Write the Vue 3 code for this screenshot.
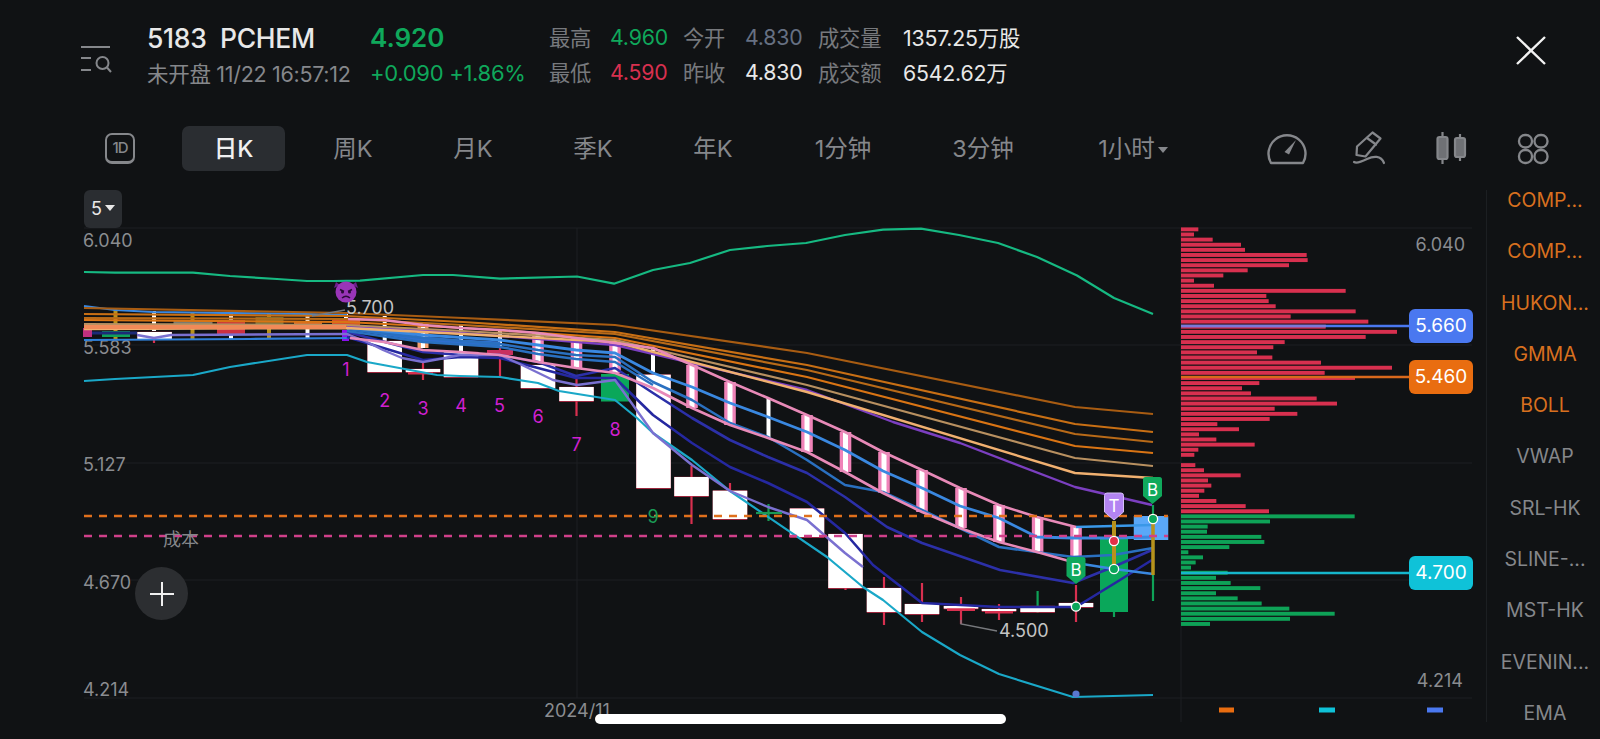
<template>
  <div class="page">
    <header class="head">
      <svg class="menu-ico" width="33" height="33" viewBox="0 0 33 33" fill="none" stroke="#85878b" stroke-width="2">
        <path d="M1 5H30M1 16H11M1 28H11" />
        <circle cx="22.5" cy="21" r="6" />
        <path d="M27 25.5L31 30" />
      </svg>
      <div class="quote">
        <div class="title">5183&nbsp;&nbsp;PCHEM</div>
        <div class="price">4.920</div>
        <div class="time">未开盘 11/22 16:57:12</div>
        <div class="change">+0.090 +1.86%</div>
      </div>
      <div class="stats">
        <template v-for="s in stats" :key="s.label">
          <span class="stat-label">{{ s.label }}</span>
          <span :class="s.cls">{{ s.value }}</span>
        </template>
      </div>
      <svg class="close-ico" width="30" height="30" viewBox="0 0 30 30" stroke="#f2f2f2" stroke-width="2.4">
        <path d="M1 2L29 29M29 2L1 29" />
      </svg>
    </header>

    <div class="toolbar">
      <div class="one-d">1D</div>
      <div class="tabs">
        <div v-for="t in tabs" :key="t.label" class="tab" :class="t.cls">
          {{ t.label }}<i v-if="t.arrow" class="arrow"></i>
        </div>
      </div>
      <div class="tools">
        <svg width="40" height="40" viewBox="0 0 40 40" fill="none" stroke="#85878b" stroke-width="2.4">
          <path d="M4 34A18.5 18.5 0 1 1 36 34Z" stroke-linejoin="round" />
          <path d="M17.5 23L29 11L22 25.5Z" fill="#85878b" stroke="none" />
        </svg>
        <svg width="40" height="40" viewBox="0 0 40 40" fill="none" stroke="#85878b" stroke-width="2.2" stroke-linejoin="round" stroke-linecap="round">
          <path d="M7.5 26L8 17.5L23.5 3.5L31.5 9.5L16.5 27.5Z" />
          <path d="M18 9L27 15.5" />
          <path d="M5 33C8 35 14 32 18 30C24 27 32 26 35 34" />
        </svg>
        <svg width="40" height="40" viewBox="0 0 40 40" fill="none" stroke="#85878b" stroke-width="2.2">
          <path d="M11.5 3V35M29 5V32" />
          <rect x="6.5" y="8" width="10" height="22" rx="2" fill="#6f7175" />
          <rect x="24" y="9" width="10" height="19" rx="2" fill="#6f7175" />
        </svg>
        <svg width="40" height="40" viewBox="0 0 40 40" fill="none" stroke="#85878b" stroke-width="2.3">
          <rect x="6" y="6" width="13" height="12.5" rx="6" />
          <rect x="21.5" y="6" width="13" height="12.5" rx="6" />
          <rect x="6" y="21" width="13" height="13" rx="6" />
          <rect x="21.5" y="21" width="13" height="13" rx="6" />
        </svg>
      </div>
    </div>

    <div class="main">
      <div class="chart">
        <svg class="plot" width="1486" height="553" viewBox="0 186 1486 553">
          <!-- grid -->
          <g stroke="#1c1f22" stroke-width="1">
            <line v-for="y in gridY" :key="y" x1="84" :y1="y" x2="1472" :y2="y" />
            <line x1="577" y1="228" x2="577" y2="698" />
            <line x1="1181" y1="228" x2="1181" y2="722" />
          </g>
          <g class="axis">
            <text x="83" y="247">6.040</text>
            <text x="83" y="354">5.583</text>
            <text x="83" y="471">5.127</text>
            <text x="83" y="589">4.670</text>
            <text x="83" y="696">4.214</text>
            <text x="1465" y="251" text-anchor="end">6.040</text>
            <text x="1463" y="687" text-anchor="end">4.214</text>
            <text x="544" y="717">2024/11</text>
          </g>

          <!-- volume profile -->
          <rect v-for="b in profile" :key="b.y" x="1181" :y="b.y" :width="b.w" height="3.9" :fill="b.fill" />
          <line x1="1181" y1="326" x2="1409" y2="326" stroke="#4a78f0" stroke-width="2.4" />
          <rect x="1181" y="324.8" width="145" height="2.4" fill="#7a78d8" />
          <line x1="1181" y1="377" x2="1409" y2="377" stroke="#d9691c" stroke-width="2.4" />
          <line x1="1181" y1="573" x2="1409" y2="573" stroke="#16b6cc" stroke-width="2.4" />
          <rect x="1219" y="707.5" width="15" height="5" fill="#e96d10" />
          <rect x="1319" y="707.5" width="16" height="5" fill="#0fc2d8" />
          <rect x="1427" y="707.5" width="16" height="5" fill="#4a78f0" />

          <!-- candles -->
          <line v-for="w in wicks" :key="w.key" :x1="w.x" :y1="w.y1" :x2="w.x" :y2="w.y2" :stroke="w.c" :stroke-width="w.sw" />
          <template v-for="c in bodies" :key="c.key">
            <rect v-if="c.fill === '#fff'" :x="c.x" :y="c.y - 0.2" :width="c.w" :height="c.h + 0.9" fill="#d8304f" />
            <rect :x="c.x" :y="c.y" :width="c.w" :height="c.h" :fill="c.fill" />
          </template>
          <template v-for="p in pinks" :key="p[0]">
            <rect :x="p[0] - 5.8" :y="p[1]" width="11.6" :height="p[2] - p[1]" fill="#f083b8" />
            <rect :x="p[0] - 2.5" :y="p[1]" width="5" :height="p[2] - p[1]" fill="#fff" />
          </template>
          <rect x="766.5" y="398" width="4" height="40" fill="#fff" />
          <rect x="651" y="348" width="4" height="24" fill="#fff" />

          <!-- indicator lines -->
          <polyline v-for="l in lines" :key="l.key" :points="l.pts" fill="none" :stroke="l.c" :stroke-width="l.sw || 2.2" stroke-linejoin="round" />
          <line x1="84" y1="516" x2="1168" y2="516" stroke="#e0701c" stroke-width="2.4" stroke-dasharray="8 7" />
          <line x1="84" y1="536" x2="1168" y2="536" stroke="#d0408a" stroke-width="2.4" stroke-dasharray="8 7" />
          <text class="cost" x="163" y="546">成本</text>

          <!-- magic numbers -->
          <text v-for="n in counts" :key="n.t" class="count" :x="n.x" :y="n.y" text-anchor="middle" :fill="n.c">{{ n.t }}</text>

          <!-- marks -->
          <path d="M312 316L345 310" stroke="#77797d" stroke-width="1.4" fill="none" />
          <text class="mark-text" x="346" y="314">5.700</text>
          <path d="M961 620V624L997 631" stroke="#77797d" stroke-width="1.4" fill="none" />
          <text class="mark-text" x="999" y="637">4.500</text>
          <path d="M336 282L334 288L340 285ZM356 282L358 288L352 285Z" fill="#6d1f8c" />
          <circle cx="346" cy="292" r="10.5" fill="#9a35b8" />
          <path d="M340 289.5L344 291.5M352 289.5L348 291.5" stroke="#2c0b38" stroke-width="1.6" />
          <circle cx="342.5" cy="292" r="1.5" fill="#2c0b38" />
          <circle cx="349.5" cy="292" r="1.5" fill="#2c0b38" />
          <path d="M342 298Q346 294.5 350 298" stroke="#2c0b38" stroke-width="1.5" fill="none" />

          <circle cx="1076" cy="694" r="3.6" fill="#5a78d0" />
          <g v-for="m in markers" :key="m.x" :transform="`translate(${m.x - 9.5} ${m.y})`">
            <path d="M2.5 0H16.5Q19 0 19 2.5V19L9.5 27L0 19V2.5Q0 0 2.5 0Z" :fill="m.c" :stroke="m.edge || 'none'" stroke-width="1" />
            <text class="flag" x="9.5" y="19" text-anchor="middle">{{ m.t }}</text>
          </g>
          <circle v-for="d in dots" :key="d.key" :cx="d.x" :cy="d.y" r="4.6" :fill="d.c" stroke="#fff" stroke-width="1.3" />
        </svg>

        <div class="period">5<i class="arrow small"></i></div>
        <div class="add">
          <svg width="24" height="24" viewBox="0 0 24 24" stroke="#f0f0f0" stroke-width="2">
            <path d="M12 0V24M0 12H24" />
          </svg>
        </div>
        <div v-for="t in tags" :key="t.text" class="tag" :class="t.cls">{{ t.text }}</div>
      </div>

      <aside class="side">
        <div v-for="(s, i) in sideItems" :key="i" class="side-item" :class="{ on: i < 5 }">{{ s }}</div>
      </aside>
    </div>

    <div class="home-bar"></div>
  </div>
</template>

<script setup>
const stats = [
  { label: '最高', value: '4.960', cls: 'up' },
  { label: '今开', value: '4.830', cls: 'slate' },
  { label: '成交量', value: '1357.25万股', cls: 'white' },
  { label: '最低', value: '4.590', cls: 'down' },
  { label: '昨收', value: '4.830', cls: 'white' },
  { label: '成交额', value: '6542.62万', cls: 'white' }
]

const tabs = [
  { label: '日K', cls: 'active' },
  { label: '周K' },
  { label: '月K' },
  { label: '季K' },
  { label: '年K' },
  { label: '1分钟', cls: 'wide' },
  { label: '3分钟', cls: 'wide' },
  { label: '1小时', cls: 'wider', arrow: true }
]

const sideItems = ['COMP...', 'COMP...', 'HUKON...', 'GMMA', 'BOLL', 'VWAP', 'SRL-HK', 'SLINE-...', 'MST-HK', 'EVENIN...', 'EMA']

const tags = [
  { text: '5.660', cls: 'blue' },
  { text: '5.460', cls: 'orange' },
  { text: '4.700', cls: 'cyan' }
]

const gridY = [228, 345, 463, 580, 698]

// bar ends as read off the chart, in 3x crop pixels
const profileEnds = [
  85, 72, 128, 213, 225, 410, 413, 357, 233, 160, 72, 132, 527, 289, 296, 317, 557, 362, 595, 467,
  681, 587, 344, 310, 261, 307, 453, 666, 464, 555, 268, 216, 243, 440, 501, 314, 382, 299, 142, 207,
  87, 139, 254, 85, 73, 33, 76, 102, 212, 114, 124, 103, 87, 139, 227, 297,
  554, 300, 113, 111, 274, 283, 178, 55, 99, 77, 63, 173, 138, 182, 271, 138, 203, 275, 358, 494, 360, 120
]
const profile = profileEnds.map((end, i) => ({
  y: 227.4 + i * 5.125,
  w: (end - 33) / 3,
  fill: i < 56 ? '#d8304f' : '#0ea257'
}))

const W = 34.5
const RED = '#d8304f'
const body = (x, y1, y2, fill = '#fff', w = W) => ({ key: `b${x}-${y1}`, x: x - w / 2, y: y1, w, h: y2 - y1, fill })
const bodies = [
  body(87.5, 328, 337, '#c03080', 9),
  body(116, 331, 337, '#0fa05a', 28),
  body(154.6, 332, 339),
  body(193, 320, 326, '#7a7a70', 39),
  body(231, 320, 335, '#cc3040', 28),
  body(269.5, 317, 326, '#6a7038', 28),
  body(308, 322, 328, '#d96a2a', 28),
  body(346, 320, 327, '#d8502a', 28),
  body(345.5, 330, 341, '#8a10f0', 7),
  body(384.7, 341, 372),
  body(423, 369, 372),
  body(420.5, 372, 374.5, RED, 25),
  body(461, 352, 377),
  body(500, 350, 355, '#c83060', 26),
  body(538, 365, 388),
  body(576.5, 387, 401),
  body(615, 374, 401.5, '#0aa75a', 28),
  body(653.5, 374.7, 488),
  body(691.5, 477, 496),
  body(730, 490.7, 519),
  body(807, 508.5, 537),
  body(845.5, 534, 588),
  body(884, 588, 612),
  body(922, 604, 614),
  body(961, 606, 608.5),
  body(961, 608.5, 611, RED, 28),
  body(999, 609, 611),
  body(999, 611, 613.5, RED, 28),
  body(1037.6, 606, 612),
  body(1076, 603, 607),
  body(1114, 538, 612, '#0aa75a', 28),
  body(1151, 516, 540, '#5aa8f8')
]

const wick = (x, y1, y2, c = RED, sw = 2.2) => ({ key: `w${x}-${y1}`, x, y1, y2, c, sw })
const GOLD = '#b8921c'
const wicks = [
  wick(115.5, 308, 339, GOLD, 4),
  wick(154, 311, 331, '#fff', 4),
  wick(154, 339, 343),
  wick(192.5, 312, 340, GOLD, 4),
  wick(231, 313, 340, '#fff', 4),
  wick(269, 313, 339, GOLD, 4),
  wick(307.5, 314, 338, '#fff', 4),
  wick(346, 314, 322, '#fff', 4),
  wick(384.7, 316, 341, '#fff', 4),
  wick(423, 323, 348, '#f4a070', 11),
  wick(423, 323, 348, '#fff', 4),
  wick(423, 360, 380),
  wick(461, 325, 352, '#fff', 4),
  wick(500, 330, 346, '#fff', 4),
  wick(500, 346, 377),
  wick(576.5, 378, 416),
  wick(691.5, 466, 524),
  wick(730, 483, 491),
  wick(845.5, 588, 590),
  wick(884, 577, 625),
  wick(922, 583, 622),
  wick(961, 597, 624),
  wick(999, 604, 620),
  wick(1037.6, 591, 613, '#0ea257'),
  wick(1076, 585, 622),
  wick(1114, 612, 617, '#0ea257'),
  wick(1153, 505, 601, '#0ea257'),
  wick(768.5, 504, 521, '#1a9a55')
]

const pinks = [
  [538, 333, 362], [576.5, 338, 368], [615, 343, 373], [692, 365, 408], [730, 382, 425],
  [807, 415, 452], [845.5, 432, 472], [884, 452, 493], [922, 470, 512], [961, 488, 528],
  [999, 505, 542], [1037.6, 517, 552], [1076, 527, 563]
]

const line = (key, c, pts, sw) => ({ key, c, sw, pts: pts.map(p => p.join(',')).join(' ') })
const lines = [
  line('boll-up', '#16b982', [[84, 272], [115, 272.7], [193, 272.7], [230, 276], [277, 279], [307, 281], [333, 281], [360, 280.7], [423, 275], [453, 275], [500, 278.6], [577, 276.5], [614, 283.7], [653, 270], [690, 263], [730, 250], [767, 246], [806, 243], [845, 235], [883, 229.6], [921, 228.6], [959, 235], [998, 243], [1037, 257], [1077, 275.5], [1114, 298], [1153, 314]]),
  line('boll-low', '#1aa8c8', [[84, 381], [115, 379], [193, 375], [230, 367], [307, 355], [347, 355], [367, 362], [437, 375], [460, 376], [500, 377], [538, 383], [559, 391], [615, 400], [637, 418], [653, 433], [692, 460], [730, 491], [827, 557], [863, 587], [883, 600], [922, 632], [960, 655], [999, 674], [1073, 697], [1153, 695]]),
  line('navy', '#1c2a78', [[92, 333], [137, 333]], 3),
  line('blue-top', '#3a88e0', [[84, 306], [115, 310], [153, 312], [307, 314], [347, 315]]),
  line('blue-low', '#3080d8', [[84, 340], [250, 339], [350, 338]]),
  line('dark2', '#2528a0', [[347, 337], [423, 360], [461, 357], [500, 358], [538, 368], [576, 378], [615, 378], [653, 415], [692, 443], [730, 467], [768, 483], [807, 502], [845, 533], [873, 565], [922, 603], [999, 607], [1076, 607], [1120, 580], [1152, 560]], 2.6),
  line('dark1', '#2c30a8', [[347, 332], [423, 352], [461, 355], [500, 355], [538, 362], [576, 376], [615, 368], [653, 393], [692, 418], [730, 440], [768, 457], [807, 473], [845, 497], [887, 527], [922, 543], [1000, 570], [1073, 583], [1113, 567], [1152, 550]], 2.6),
  line('lav', '#7a70d0', [[137, 335], [154, 338], [171, 335], [347, 334], [367, 342], [383, 350], [402, 358], [423, 362], [445, 358], [460, 355], [500, 355], [522, 365], [553, 380], [577, 385], [615, 380], [653, 433], [692, 465], [730, 491], [768, 507], [807, 520], [845, 553], [863, 567]], 2.4),
  line('band-blue', '#2f6fd0', [[347, 327], [423, 339], [461, 342], [500, 344]], 5),
  line('fan', '#2a70c0', [[347, 331], [423, 342], [500, 347], [538, 354], [576, 359], [615, 362], [653, 385]], 2.4),
  line('mid', '#2a70c0', [[347, 329], [423, 338], [500, 344], [538, 350], [576, 355], [615, 357], [653, 382], [692, 400], [730, 423], [768, 437], [807, 460], [845, 485], [883, 492], [922, 510], [999, 547], [1073, 557], [1113, 555], [1153, 548]], 2.6),
  line('bright', '#3a88e0', [[347, 327], [423, 335], [500, 340], [538, 345], [576, 350], [615, 353], [653, 373], [692, 387], [730, 403], [768, 417], [807, 432], [845, 450], [883, 471], [922, 488], [960, 506], [999, 518], [1037, 537], [1073, 538], [1113, 538], [1153, 537]], 2.8),
  line('ext-up', '#3a98e8', [[1076, 527], [1113, 526], [1153, 525]], 2.4),
  line('ext-low', '#3a88e0', [[1076, 563], [1114, 569], [1153, 574]], 2.4),
  line('gold-21', GOLD, [[1114, 521], [1114, 570]], 4),
  line('gold-22', GOLD, [[1153, 516], [1153, 575]], 3.5),
  line('purple', '#7b3fc0', [[347, 326], [461, 333], [615, 345], [807, 390], [893, 422], [960, 443], [1075, 487], [1152, 505]], 2.4),
  line('o1', '#a85c12', [[84, 308], [346, 313], [463, 318], [615, 325], [807, 353], [1075, 407], [1153, 414]]),
  line('o2', '#c86f14', [[84, 314], [346, 316], [463, 322], [615, 332], [807, 365], [1075, 424], [1153, 432]]),
  line('o3', '#b86a18', [[84, 318], [346, 319], [463, 325], [615, 334], [807, 370], [1075, 434], [1153, 442]]),
  line('o4', '#d97414', [[84, 320], [346, 322], [463, 328], [615, 338], [807, 377], [1075, 446], [1153, 453]]),
  line('o5', '#b89060', [[84, 324], [346, 325], [463, 331], [615, 340], [807, 385], [1075, 458], [1153, 466]]),
  line('o6', '#f0b070', [[84, 329], [346, 328], [463, 334], [615, 342], [807, 392], [1075, 473], [1153, 478]], 2.4),
  line('band', '#f08a58', [[84, 327], [346, 327]], 4),
  line('pink-up', '#e88ab8', [[348, 319], [384, 320], [423, 325], [461, 328], [500, 330], [538, 333], [576, 338], [615, 343], [653, 348], [692, 365], [730, 382], [768, 398], [807, 415], [845, 432], [883, 452], [922, 470], [960, 488], [999, 505], [1037, 517], [1076, 527]], 2.6),
  line('pink-low', '#e88ab8', [[350, 338], [384, 342], [423, 350], [461, 352], [500, 355], [538, 362], [576, 368], [615, 373], [653, 388], [692, 408], [730, 425], [768, 438], [807, 452], [845, 472], [883, 493], [922, 512], [960, 528], [999, 542], [1037, 552], [1076, 563]], 2.6),
  line('cross', '#1a9a55', [[756, 513], [782, 513]], 2.2)
]

const MAGENTA = '#d020d0'
const counts = [
  { t: '1', x: 346, y: 376, c: MAGENTA },
  { t: '2', x: 384.7, y: 407, c: MAGENTA },
  { t: '3', x: 423, y: 415, c: MAGENTA },
  { t: '4', x: 461, y: 412, c: MAGENTA },
  { t: '5', x: 499.6, y: 412, c: MAGENTA },
  { t: '6', x: 538, y: 423, c: MAGENTA },
  { t: '7', x: 576.5, y: 451, c: MAGENTA },
  { t: '8', x: 615, y: 436, c: MAGENTA },
  { t: '9', x: 653, y: 523, c: '#1a9a55' }
]

const markers = [
  { x: 1076, y: 557, t: 'B', c: '#10a95c' },
  { x: 1114, y: 493, t: 'T', c: '#b384f2', edge: '#d6c0fa' },
  { x: 1152.5, y: 477, t: 'B', c: '#10a95c' }
]

const dots = [
  { key: 'd1', x: 1076, y: 606.6, c: '#0aa75a' },
  { key: 'd2', x: 1114, y: 541, c: '#e03048' },
  { key: 'd3', x: 1114, y: 569, c: '#0aa75a' },
  { key: 'd4', x: 1153, y: 519, c: '#0aa75a' }
]
</script>

<style>
body {
  background: #101214;
}
</style>

<style scoped>
.page {
  position: relative;
  width: 1600px;
  height: 739px;
  overflow: hidden;
  background: #101214;
  color: #85878b;
  font-family: Inter, "Noto Sans CJK SC", sans-serif;
}

.head {
  display: flex;
  align-items: flex-start;
  height: 106px;
  padding: 20px 54px 0 80px;
  box-sizing: border-box;
}

.menu-ico {
  margin-top: 22px;
}

.quote {
  display: grid;
  grid-template-columns: 223px 179px;
  grid-auto-rows: 35px;
  align-items: center;
  margin-left: 34px;
}

.title {
  font-size: 26.5px;
  font-weight: 500;
  letter-spacing: -0.3px;
  color: #e8e8e8;
}

.price {
  font-size: 26px;
  font-weight: 600;
  color: #0fa85b;
}

.time {
  font-size: 21.5px;
  letter-spacing: -0.3px;
  white-space: nowrap;
}

.change {
  font-size: 22px;
  letter-spacing: -0.3px;
  color: #0fa85b;
  white-space: nowrap;
}

.stats {
  display: grid;
  grid-template-columns: 61px 73px 62px 73px 85px auto;
  grid-auto-rows: 35px;
  align-items: center;
  margin-top: -1px;
  font-size: 21.3px;
  letter-spacing: -0.2px;
}

.stat-label {
  color: #77797d;
}

.up {
  color: #0fa85b;
}

.down {
  color: #d8304f;
}

.slate {
  color: #667082;
}

.white {
  color: #e8e8e8;
}

.close-ico {
  margin-left: auto;
  margin-top: 15px;
}

.toolbar {
  display: flex;
  align-items: center;
  height: 45px;
  margin-top: 20px;
  padding-left: 105px;
}

.one-d {
  width: 30px;
  height: 31px;
  box-sizing: border-box;
  border: 2px solid #85878b;
  border-bottom-width: 3px;
  border-radius: 7px;
  font-size: 15px;
  font-weight: 500;
  line-height: 26px;
  letter-spacing: -1px;
  text-align: center;
}

.tabs {
  display: flex;
  align-items: center;
  margin-left: 47px;
  font-size: 23.5px;
}

.tab {
  width: 120px;
  line-height: 45px;
  text-align: center;
  white-space: nowrap;
}

.tab.active {
  width: 103px;
  margin-right: 8px;
  border-radius: 7px;
  background: #2a2d31;
  color: #f0f0f0;
  font-weight: 500;
}

.tab.wide {
  width: 140px;
}

.tab.wider {
  width: 160px;
}

.arrow {
  display: inline-block;
  margin-left: 3px;
  border-left: 5.5px solid transparent;
  border-right: 5.5px solid transparent;
  border-top: 6px solid #85878b;
  vertical-align: 4px;
}

.arrow.small {
  border-top-color: #e8e8e8;
}

.tools {
  display: flex;
  gap: 42px;
  margin-left: 54px;
}

.main {
  display: flex;
  margin-top: 15px;
  height: 553px;
}

.chart {
  position: relative;
  width: 1486px;
  flex: none;
}

.plot {
  display: block;
}

.axis text {
  font-size: 18px;
  fill: #8a8c90;
}

.cost {
  font-size: 18px;
  fill: #85878b;
}

.count {
  font-size: 18px;
}

.mark-text {
  font-size: 18px;
  fill: #c4c4c4;
}

.flag {
  font-size: 17px;
  fill: #fff;
}

.period {
  position: absolute;
  left: 84px;
  top: 4px;
  width: 38px;
  height: 38px;
  border-radius: 6px;
  background: #2a2d31;
  color: #e8e8e8;
  font-size: 18px;
  line-height: 38px;
  text-align: center;
}

.add {
  position: absolute;
  left: 135px;
  top: 381px;
  display: flex;
  align-items: center;
  justify-content: center;
  width: 53px;
  height: 53px;
  border-radius: 50%;
  background: #2c2e31;
}

.tag {
  position: absolute;
  left: 1409px;
  width: 64px;
  height: 34px;
  border-radius: 6px;
  color: #fff;
  font-size: 19px;
  line-height: 34px;
  text-align: center;
}

.tag.blue {
  top: 123px;
  background: #4a78f0;
}

.tag.orange {
  top: 174px;
  background: #e96d10;
}

.tag.cyan {
  top: 370px;
  background: #0fc2d8;
}

.side {
  flex: 1;
  height: 532px;
  padding-top: 1px;
  padding-left: 3px;
  margin-top: 4px;
  box-sizing: border-box;
  border-left: 1px solid #1c1f22;
}

.side-item {
  height: 51.3px;
  font-size: 19.5px;
  line-height: 19px;
  text-align: center;
  white-space: nowrap;
  color: #85878b;
}

.side-item.on {
  color: #d8701f;
}

.home-bar {
  position: absolute;
  left: 595px;
  top: 714px;
  width: 411px;
  height: 10px;
  border-radius: 5px;
  background: #fff;
}
</style>
